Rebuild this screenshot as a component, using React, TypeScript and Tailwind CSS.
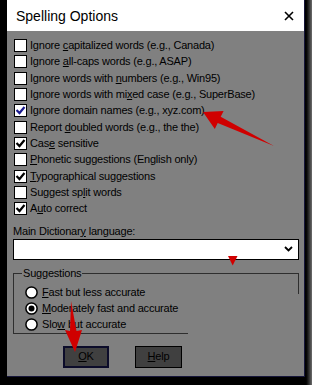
import React from 'react';

// Spelling Options dialog (classic Windows look) with red annotation arrows.

type Row = { pre: string; u?: string; post?: string; checked?: boolean; blue?: boolean };

const rows: Row[] = [
  { pre: 'Ignore ', u: 'c', post: 'apitalized words (e.g., Canada)' },
  { pre: 'Ignore ', u: 'a', post: 'll-caps words (e.g., ASAP)' },
  { pre: 'Ignore words with ', u: 'n', post: 'umbers (e.g., Win95)' },
  { pre: 'Ignore words with mi', u: 'x', post: 'ed case (e.g., SuperBase)' },
  { pre: 'Ignore domain names (e.g., xyz.com)', checked: true, blue: true },
  { pre: 'Report ', u: 'd', post: 'oubled words (e.g., the the)' },
  { pre: 'Cas', u: 'e', post: ' sensitive', checked: true },
  { pre: '', u: 'P', post: 'honetic suggestions (English only)' },
  { pre: '', u: 'T', post: 'ypographical suggestions', checked: true },
  { pre: 'Suggest sp', u: 'l', post: 'it words' },
  { pre: 'A', u: 'u', post: 'to correct', checked: true },
];

const radios = [
  { pre: '', u: 'F', post: 'ast but less accurate' },
  { pre: '', u: 'M', post: 'oderately fast and accurate', checked: true },
  { pre: 'Slo', u: 'w', post: ' but accurate' },
];

function CheckBox({ checked, blue }: { checked?: boolean; blue?: boolean }) {
  return (
    <span className="w-[13px] h-[13px] shrink-0 bg-white border border-black flex items-center justify-center">
      {checked && (
        <svg width="11" height="11" viewBox="0 0 11 11">
          <polyline
            points="1.5,5 4.5,8 9.5,2"
            fill="none"
            stroke={blue ? '#1b1b8f' : '#000'}
            strokeWidth="2.2"
          />
        </svg>
      )}
    </span>
  );
}

function Radio({ checked }: { checked?: boolean }) {
  return (
    <svg width="13" height="13" viewBox="0 0 13 13" className="shrink-0">
      <circle cx="6.5" cy="6.5" r="5.6" fill="#fff" stroke="#000" strokeWidth="1.5" />
      {checked && <circle cx="6.5" cy="6.5" r="3" fill="#000" />}
    </svg>
  );
}

function Label({ pre, u, post }: { pre: string; u?: string; post?: string }) {
  return (
    <span className="whitespace-nowrap">
      {pre}
      {u && <u>{u}</u>}
      {post}
    </span>
  );
}

export default function App() {
  return (
    <div
      className="relative flex w-[312px] h-[385px] bg-black overflow-hidden text-black text-[11px] leading-[13px] tracking-[-0.2px]"
      style={{ fontFamily: '"Liberation Sans", Arial, sans-serif' }}
    >
      <div className="w-[305px] pl-[7px] flex flex-col">
        <div className="w-[298px] h-[377px] flex flex-col border-r border-b border-[#16163a]">
          {/* title bar */}
          <div className="h-[31px] bg-white flex items-center justify-between pl-[9px] pr-[10px]">
            <span className="text-[14px] leading-[16px] tracking-normal">Spelling Options</span>
            <svg width="10" height="10" viewBox="0 0 10 10">
              <path d="M1 1 L9 9 M9 1 L1 9" stroke="#000" strokeWidth="1.6" />
            </svg>
          </div>

          {/* body */}
          <div className="flex-1 bg-[#808080] pl-[6px] pt-[6.5px] flex flex-col">
            {rows.map((r, i) => (
              <div key={i} className="h-[16.3px] pl-[1px] flex items-center gap-[3px]">
                <CheckBox checked={r.checked} blue={r.blue} />
                <Label pre={r.pre} u={r.u} post={r.post} />
              </div>
            ))}

            <div className="mt-[8px] h-[13px]">
              Main Dictionar<u>y</u> language:
            </div>
            <div className="mt-[1px] w-[286px] h-[21px] bg-white border border-black flex items-center justify-end pr-[5px]">
              <svg width="9" height="6" viewBox="0 0 9 6">
                <polyline points="1,1 4.5,4.5 8,1" fill="none" stroke="#000" strokeWidth="1.8" />
              </svg>
            </div>

            <fieldset className="relative mt-[7.5px] w-[286px] border-0 border-l border-t border-[#2e2e2e] p-0 m-0 min-w-0">
              <legend className="ml-[8px] px-[1px]">Suggestions</legend>
              <span className="absolute right-0 top-[-7px] h-[21px] w-px bg-[#2e2e2e]" />
              <div className="pl-[11px] pt-[4.5px] flex flex-col">
                {radios.map((r, i) => (
                  <div key={i} className="h-[16px] flex items-center gap-[4px]">
                    <Radio checked={r.checked} />
                    <Label pre={r.pre} u={r.u} post={r.post} />
                  </div>
                ))}
              </div>
              <div className="w-[174px] h-px bg-[#2e2e2e]" />
            </fieldset>

            <div className="mt-[12px] pl-[50px] flex gap-[26px]">
              <button className="w-[46px] h-[22px] border-2 border-[#0c0c2a] bg-[#404040] flex items-center justify-center">
                <span><u>O</u>K</span>
              </button>
              <button className="w-[47px] h-[22px] border border-black bg-[#404040] flex items-center justify-center">
                <span><u>H</u>elp</span>
              </button>
            </div>
          </div>
        </div>
      </div>
      <div className="w-[7px] h-full bg-gradient-to-r from-black to-[#6e6e6e]" />

      {/* red annotation arrows */}
      <svg className="absolute inset-0 pointer-events-none" width="312" height="385" viewBox="0 0 312 385">
        <polygon
          points="203,112 223.6,110.9 220.7,116.8 274,146 217.7,123 214.8,128.9"
          fill="#d00000"
        />
        <polygon points="228,256 237.5,256 232.7,265.5" fill="#d00000" />
        <polygon points="71,301 76.5,331 82,330 75,352 65,330 70,331" fill="#d00000" />
      </svg>
    </div>
  );
}
